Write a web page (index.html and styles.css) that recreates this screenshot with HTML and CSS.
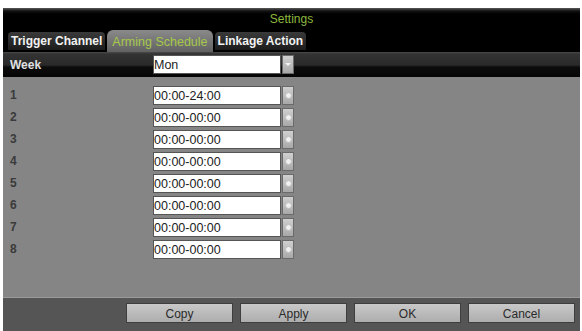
FILE: index.html
```html
<!DOCTYPE html>
<html>

<head>
    <meta charset="utf-8">
    <meta name="viewport" content="width=device-width">
    <title>Settings</title>
    <link rel="stylesheet" href="styles.css">
</head>

<body>
    <div class="dialog">
        <div class="title">Settings</div>
        <ul class="tab-list">
            <li class="tab-item">Trigger Channel</li>
            <li class="tab-item active">Arming Schedule</li>
            <li class="tab-item">Linkage Action</li>
        </ul>
        <div class="week-row">
            <span class="week-label">Week</span>
            <div class="field">
                <span class="field-text">Mon</span>
            </div>
            <span class="field-btn arrow"></span>
        </div>
        <div class="panel">
            <div class="row"><span class="num">1</span><div class="field"><span class="field-text">00:00-24:00</span></div><span class="field-btn"><i class="dot"></i></span></div>
            <div class="row"><span class="num">2</span><div class="field"><span class="field-text">00:00-00:00</span></div><span class="field-btn"><i class="dot"></i></span></div>
            <div class="row"><span class="num">3</span><div class="field"><span class="field-text">00:00-00:00</span></div><span class="field-btn"><i class="dot"></i></span></div>
            <div class="row"><span class="num">4</span><div class="field"><span class="field-text">00:00-00:00</span></div><span class="field-btn"><i class="dot"></i></span></div>
            <div class="row"><span class="num">5</span><div class="field"><span class="field-text">00:00-00:00</span></div><span class="field-btn"><i class="dot"></i></span></div>
            <div class="row"><span class="num">6</span><div class="field"><span class="field-text">00:00-00:00</span></div><span class="field-btn"><i class="dot"></i></span></div>
            <div class="row"><span class="num">7</span><div class="field"><span class="field-text">00:00-00:00</span></div><span class="field-btn"><i class="dot"></i></span></div>
            <div class="row"><span class="num">8</span><div class="field"><span class="field-text">00:00-00:00</span></div><span class="field-btn"><i class="dot"></i></span></div>
        </div>
        <div class="footer">
            <span class="btn">Copy</span>
            <span class="btn">Apply</span>
            <span class="btn">OK</span>
            <span class="btn">Cancel</span>
        </div>
    </div>
</body>

</html>
```

FILE: styles.css
```css
body {
    margin: 0;
    background: #fff;
    font-family: "Liberation Sans", Arial, sans-serif;
}

.dialog {
    margin: 8px 0 0 3px;
    width: 577px;
    height: 323px;
    display: flex;
    flex-direction: column;
    background: #000;
}

.title {
    height: 22px;
    line-height: 22px;
    text-align: center;
    color: #8db83c;
    font-size: 12px;
    background: linear-gradient(#5a5a5a 0, #111 3px, #000 6px);
}

.tab-list {
    height: 22px;
    margin: 0;
    padding: 0 0 0 5px;
    list-style: none;
    display: flex;
    align-items: center;
    gap: 2px;
    background: #000;
}

.tab-item {
    height: 18px;
    line-height: 18px;
    padding: 0 3px;
    color: #f2f2f2;
    font-size: 12px;
    font-weight: bold;
    border-radius: 4px 4px 0 0;
    background: linear-gradient(#3a3a3a, #1c1c1c);
}

.tab-item.active {
    height: 24px;
    line-height: 24px;
    margin-top: 2px;
    padding: 0 5px;
    color: #a6c94a;
    font-size: 12.5px;
    font-weight: normal;
    background: linear-gradient(#8a8a8a, #5e5e5e);
    border-radius: 6px 6px 0 0;
}

.week-row {
    height: 25px;
    display: flex;
    align-items: center;
    background: linear-gradient(#4a4a4a 0, #333 2px, #2a2a2a 13px, #0c0c0c 15px, #050505);
}

.week-label {
    width: 150px;
    padding-left: 7px;
    box-sizing: border-box;
    color: #e0e0e0;
    font-size: 12px;
    font-weight: bold;
}

.field {
    width: 128px;
    height: 19px;
    box-sizing: border-box;
    background: #fff;
    border: 1px solid #555;
    display: flex;
    align-items: center;
}

.field-text {
    padding-left: 0;
    font-size: 12.5px;
    color: #222;
}

.field-btn {
    width: 12px;
    height: 19px;
    margin-left: 1px;
    box-sizing: border-box;
    background: linear-gradient(#d0d0d0, #a8a8a8);
    border: 1px solid #6a6a6a;
    display: flex;
    align-items: center;
    justify-content: center;
}

.field-btn.arrow::after {
    content: "";
    border-left: 3px solid transparent;
    border-right: 3px solid transparent;
    border-top: 3px solid #f4f4f4;
}

.dot {
    width: 5px;
    height: 5px;
    border-radius: 50%;
    background: #f0f0f0;
    border: 1px solid #bdbdbd;
}

.panel {
    flex: 1;
    padding-top: 9px;
    background: #858585;
    border-bottom: 1px solid #9a9a9a;
}

.row {
    height: 22px;
    display: flex;
    align-items: flex-start;
}

.num {
    width: 150px;
    padding-left: 7px;
    box-sizing: border-box;
    line-height: 19px;
    color: #3a3a3a;
    font-size: 12px;
    font-weight: bold;
}

.footer {
    height: 33px;
    box-sizing: border-box;
    padding: 5px 5px 0 0;
    display: flex;
    justify-content: flex-end;
    gap: 7px;
    background: #555;
}

.btn {
    width: 107px;
    height: 20px;
    line-height: 20px;
    box-sizing: border-box;
    text-align: center;
    font-size: 12px;
    color: #2a2a2a;
    background: linear-gradient(#c8c8c8, #adadad);
    border: 1px solid #3e3e3e;
}
```
